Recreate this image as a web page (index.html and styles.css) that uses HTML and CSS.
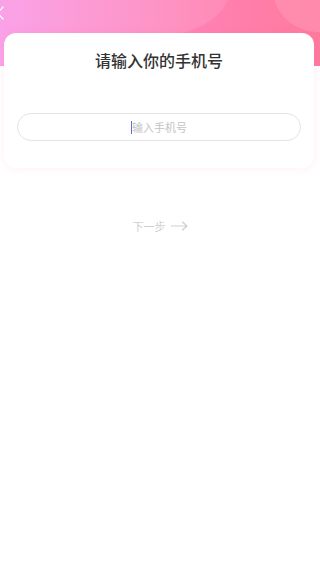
FILE: index.html
```html
<!DOCTYPE html>
<html lang="zh">
<head>
<meta charset="utf-8">
<title>请输入你的手机号</title>
<link rel="stylesheet" href="styles.css">
</head>
<body>
<div class="page">
  <header class="hero">
    <svg class="hero-deco" viewBox="0 0 320 66" preserveAspectRatio="none" aria-hidden="true">
      <path d="M0 0 H228 C222 14 208 24 192 30 C170 38 150 44 120 48 C80 53 40 58 0 66 Z" fill="#ffffff" fill-opacity="0.10"/>
      <circle cx="318" cy="-14" r="46" fill="#ffffff" fill-opacity="0.12"/>
    </svg>
    <svg class="back" viewBox="0 0 10 14" aria-hidden="true">
      <path d="M6 1 L0.5 7 L6 13" fill="none" stroke="#ffffff" stroke-width="1.2" stroke-linecap="round" stroke-linejoin="round"/>
    </svg>
  </header>
  <section class="card">
    <h1 class="title">请输入你的手机号</h1>
    <div class="field">
      <span class="caret"></span><span class="placeholder">输入手机号</span>
    </div>
  </section>
  <div class="next">
    <span class="next-text">下一步</span>
    <svg class="next-arrow" viewBox="0 0 17 10" aria-hidden="true">
      <path d="M0.5 5 H16 M11.5 1 L16 5 L11.5 9" fill="none" stroke="#cfcfcf" stroke-width="1.2" stroke-linecap="round" stroke-linejoin="round"/>
    </svg>
  </div>
</div>
</body>
</html>
```
FILE: styles.css
```css
* { box-sizing: border-box; }
html, body {
  margin: 0;
  padding: 0;
  background: #ffffff;
  font-family: "Noto Sans CJK SC", "Noto Sans", sans-serif;
}
.page {
  width: 320px;
  min-height: 570px;
  display: flex;
  flex-direction: column;
}
.hero {
  position: relative;
  height: 66px;
  overflow: hidden;
  background: linear-gradient(90deg, #fa98e6 0%, #fd8cc6 40%, #ff7fae 70%, #ff7a9e 100%);
  flex-shrink: 0;
}
.hero-deco {
  position: absolute;
  left: 0;
  top: 0;
  width: 320px;
  height: 66px;
}
.back {
  position: absolute;
  left: -3px;
  top: 6px;
  width: 10px;
  height: 14px;
}
.card {
  position: relative;
  margin: -33px 0 0 4px;
  width: 310px;
  background: #ffffff;
  border-radius: 12px;
  box-shadow: 0 0 8px rgba(255, 110, 160, 0.12);
  padding: 16px 13px 27px 13px;
  display: flex;
  flex-direction: column;
  align-items: center;
}
.title {
  margin: 0;
  font-size: 16px;
  line-height: 22px;
  font-weight: 500;
  color: #333333;
  letter-spacing: 0;
}
.field {
  margin-top: 42px;
  width: 284px;
  height: 28px;
  border: 1px solid #e4e4e4;
  border-radius: 14px;
  display: flex;
  align-items: center;
  justify-content: center;
}
.caret {
  width: 1px;
  height: 13px;
  background: #5b6ee8;
  margin-right: 0;
}
.placeholder {
  font-size: 11px;
  line-height: 14px;
  color: #c4c4c4;
}
.next {
  margin-top: 48px;
  height: 20px;
  display: flex;
  align-items: center;
  justify-content: center;
  gap: 5px;
}
.next-text {
  font-size: 11px;
  line-height: 20px;
  color: #cfcfcf;
}
.next-arrow {
  width: 17px;
  height: 10px;
}
```
